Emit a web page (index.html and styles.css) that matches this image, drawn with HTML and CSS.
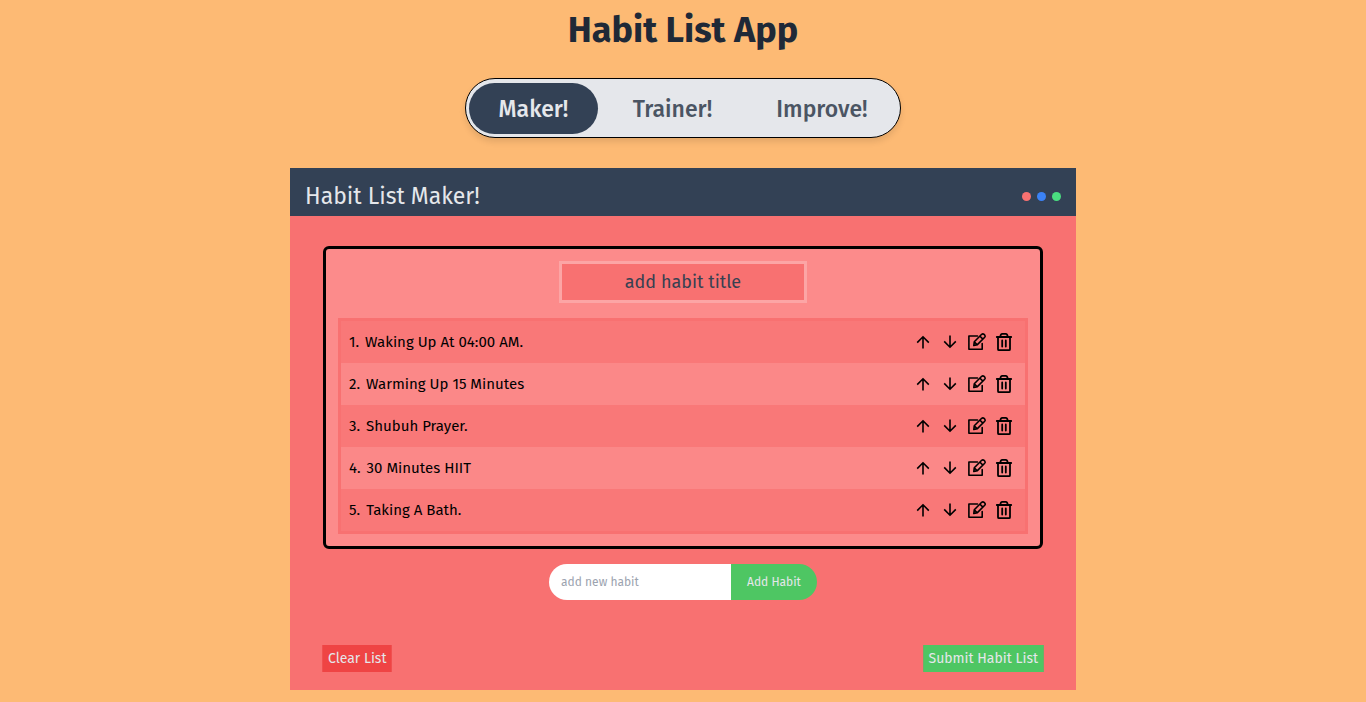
FILE: index.html
```
<!DOCTYPE html>
<html lang="en">
<head>
<meta charset="utf-8">
<meta name="viewport" content="width=device-width, initial-scale=1">
<title>Habit List App</title>
<link rel="stylesheet" href="styles.css">
</head>
<body>
<svg class="sprite" aria-hidden="true">
  <symbol id="up" viewBox="0 0 22 22"><path fill="none" stroke="currentColor" stroke-width="1.600" d="M11 17.500V6M5.200 11.600L11 5.800l5.800 5.800"/></symbol>
  <symbol id="down" viewBox="0 0 22 22"><path fill="none" stroke="currentColor" stroke-width="1.600" d="M11 4.500V16M5.200 10.400L11 16.200l5.800-5.800"/></symbol>
  <symbol id="edit" viewBox="0 0 20 20"><g fill="none" stroke="currentColor" stroke-width="1.600" stroke-linejoin="round" stroke-linecap="round"><path d="M10.500 4H1.900v13.300h13.300V11.500"/><path d="M6.800 13.500l.5-3.800 7.400-7.400q1.200-1 2.400.1l.6.600q1 1.200 0 2.300l-7.300 7.300zM13 4.200l2.900 2.900M7.500 10l2.700 2.700"/></g></symbol>
  <symbol id="trash" viewBox="0 0 20 20"><g fill="none" stroke="currentColor" stroke-width="1.800" stroke-linecap="round" stroke-linejoin="round"><path d="M2.800 5h14.400M4 5v12.200q0 1 1 1h10q1 0 1-1V5M6.300 5q.2-3.200 2-3.200h3.400q1.800 0 2 3.200M8.200 8.500v6M11.800 8.500v6"/></g></symbol>
</svg>
<main class="app">
  <h1 class="app-title">Habit List App</h1>
  <nav class="tabs" aria-label="Sections">
    <button class="tab active" type="button">Maker!</button>
    <button class="tab" type="button">Trainer!</button>
    <button class="tab" type="button">Improve!</button>
  </nav>
  <section class="panel">
    <header class="panel-header">
      <h2 class="panel-title">Habit List Maker!</h2>
      <div class="dots"><span class="dot red"></span><span class="dot blue"></span><span class="dot green"></span></div>
    </header>
    <div class="panel-body">
      <div class="card">
        <input class="title-input" type="text" placeholder="add habit title" aria-label="Habit title">
        <ul class="habits">
          <li class="habit"><span>1.</span><span class="name">Waking Up At 04:00 AM.</span>
            <button class="icon" type="button" aria-label="Move up"><svg><use href="#up"/></svg></button><button class="icon" type="button" aria-label="Move down"><svg><use href="#down"/></svg></button><button class="icon" type="button" aria-label="Edit"><svg><use href="#edit"/></svg></button><button class="icon" type="button" aria-label="Delete"><svg><use href="#trash"/></svg></button></li>
          <li class="habit"><span>2.</span><span class="name">Warming Up 15 Minutes</span>
            <button class="icon" type="button" aria-label="Move up"><svg><use href="#up"/></svg></button><button class="icon" type="button" aria-label="Move down"><svg><use href="#down"/></svg></button><button class="icon" type="button" aria-label="Edit"><svg><use href="#edit"/></svg></button><button class="icon" type="button" aria-label="Delete"><svg><use href="#trash"/></svg></button></li>
          <li class="habit"><span>3.</span><span class="name">Shubuh Prayer.</span>
            <button class="icon" type="button" aria-label="Move up"><svg><use href="#up"/></svg></button><button class="icon" type="button" aria-label="Move down"><svg><use href="#down"/></svg></button><button class="icon" type="button" aria-label="Edit"><svg><use href="#edit"/></svg></button><button class="icon" type="button" aria-label="Delete"><svg><use href="#trash"/></svg></button></li>
          <li class="habit"><span>4.</span><span class="name">30 Minutes HIIT</span>
            <button class="icon" type="button" aria-label="Move up"><svg><use href="#up"/></svg></button><button class="icon" type="button" aria-label="Move down"><svg><use href="#down"/></svg></button><button class="icon" type="button" aria-label="Edit"><svg><use href="#edit"/></svg></button><button class="icon" type="button" aria-label="Delete"><svg><use href="#trash"/></svg></button></li>
          <li class="habit"><span>5.</span><span class="name">Taking A Bath.</span>
            <button class="icon" type="button" aria-label="Move up"><svg><use href="#up"/></svg></button><button class="icon" type="button" aria-label="Move down"><svg><use href="#down"/></svg></button><button class="icon" type="button" aria-label="Edit"><svg><use href="#edit"/></svg></button><button class="icon" type="button" aria-label="Delete"><svg><use href="#trash"/></svg></button></li>
        </ul>
      </div>
      <form class="add-form">
        <input class="add-input" type="text" placeholder="add new habit" aria-label="New habit">
        <button class="add-button" type="button">Add Habit</button>
      </form>
      <div class="actions">
        <button class="action clear" type="button">Clear List</button>
        <button class="action submit" type="button">Submit Habit List</button>
      </div>
    </div>
  </section>
</main>
</body>
</html>
```
FILE: styles.css
```
* { box-sizing: border-box; }
body {
  margin: 0;
  background: #fdba74;
  color: #000;
  font: 16px/24px "Fira Sans", "Noto Sans", sans-serif;
}
button, input { font: inherit; color: inherit; margin: 0; padding: 0; border: 0; border-radius: 0; background: none; }
button { cursor: pointer; }
.sprite { position: absolute; width: 0; height: 0; }
.app { display: flex; flex-direction: column; align-items: center; padding: 10px 16px 12px; }
.app-title { margin: 0; color: #1f2937; font-size: 36px; line-height: 40px; font-weight: 700; }
.tabs {
  display: grid;
  grid-template-columns: 129fr 139fr 150fr;
  gap: 5px;
  width: 100%;
  max-width: 436px;
  margin: 28px 0 30px;
  padding: 4px 3px 3px;
  background: #e5e7eb;
  border: 1px solid #000;
  border-radius: 30px;
  box-shadow: 0 4px 6px rgba(0, 0, 0, .1);
}
.tab { height: 51px; border-radius: 26px; color: #4b5563; font-size: 23px; font-weight: 500; }
.tab.active { background: #334155; color: #e5e7eb; }
.panel { width: 100%; max-width: 786px; background: #f87171; }
.panel-header {
  display: flex;
  justify-content: space-between;
  align-items: center;
  padding: 12px 15px 4px;
  background: #334155;
}
.panel-title { margin: 0; color: #e5e7eb; font-size: 23px; line-height: 32px; font-weight: 400; }
.dots { display: flex; gap: 6px; }
.dot { width: 9px; height: 9px; border-radius: 50%; }
.red { background: #f87171; }
.blue { background: #3b82f6; }
.green { background: #4ade80; }
.panel-body { padding: 30px 32px 18px; }
.card {
  display: flex;
  flex-direction: column;
  align-items: center;
  margin: 0 1px;
  padding: 12px;
  background: #fc8b8b;
  border: 3px solid #000;
  border-radius: 6px;
}
.title-input {
  width: 248px;
  height: 42px;
  background: #f87171;
  border: 3px solid #fca5a5;
  text-align: center;
  font-size: 18px;
}
.title-input::placeholder { color: #374151; opacity: 1; }
.habits { width: 100%; margin: 15px 0 0; padding: 0; list-style: none; border: 3px solid #f87171; }
.habit { display: flex; align-items: center; height: 42px; padding: 0 10px 0 8px; background: #f97878; font-size: 15px; }
.habit:nth-child(even) { background: #fb8888; }
.name { flex: 1; margin-left: 6px; }
.icon { display: flex; justify-content: center; width: 22px; margin-left: 5px; }
.icon svg { width: 22px; height: 22px; }
.icon:nth-of-type(n+3) svg { width: 20px; height: 20px; }
.add-form { display: flex; width: 268px; margin: 15px auto 45px; }
.add-input {
  flex: 1;
  min-width: 0;
  height: 36px;
  padding: 0 12px;
  background: #fff;
  border-radius: 18px 0 0 18px;
  font-size: 12px;
}
.add-input::placeholder { color: #9ca3af; opacity: 1; }
.add-button { width: 86px; background: #4ec663; border-radius: 0 18px 18px 0; color: #e5e7eb; font-size: 12px; }
.actions { display: flex; justify-content: space-between; }
.action { height: 27px; padding: 0 5px; border: 0 solid; border-width: 0 1px; color: #e5e7eb; font-size: 14px; line-height: 27px; }
.clear { background: #ef4444; border-color: #f05050; }
.submit { background: #4ec663; border-color: #6fae66; }
```
